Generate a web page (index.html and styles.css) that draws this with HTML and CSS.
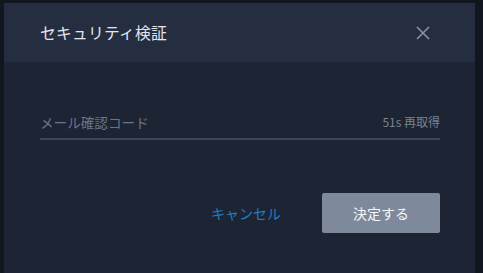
FILE: index.html
```html
<!DOCTYPE html>
<html lang="ja">
<head>
<meta charset="utf-8">
<link rel="stylesheet" href="styles.css">
</head>
<body>
<div class="modal">
  <div class="modal-header">
    <div class="modal-title">セキュリティ検証</div>
    <button class="close" aria-label="close">
      <svg width="14" height="14" viewBox="0 0 14 14"><path d="M1 1L13 13M13 1L1 13" stroke="#8a93a3" stroke-width="1.6" fill="none"/></svg>
    </button>
  </div>
  <div class="modal-body">
    <div class="field">
      <span class="placeholder">メール確認コード</span>
      <span class="resend">51s 再取得</span>
    </div>
    <div class="actions">
      <button class="btn-cancel">キャンセル</button>
      <button class="btn-ok">決定する</button>
    </div>
  </div>
</div>
</body>
</html>
```
FILE: styles.css
```css
html, body {
  margin: 0;
  padding: 0;
  background: #11161f;
  width: 483px;
  height: 273px;
  overflow: hidden;
  font-family: "Noto Sans CJK JP", "Noto Sans", sans-serif;
}
body {
  padding: 3px 8px 0 4px;
  box-sizing: border-box;
}
.modal {
  width: 471px;
  height: 280px;
  background: #1d2433;
}
.modal-header {
  height: 59px;
  background: #252d40;
  display: flex;
  align-items: center;
  justify-content: space-between;
  padding: 0 45px 0 36px;
  box-sizing: border-box;
}
.modal-title {
  color: #e3e6ec;
  font-size: 15.8px;
  letter-spacing: 0.2px;
  line-height: 20px;
  padding-top: 1px;
}
.close {
  background: none;
  border: none;
  padding: 0;
  width: 14px;
  height: 14px;
  display: flex;
}
.modal-body {
  padding: 46px 35px 0 36px;
}
.field {
  display: flex;
  justify-content: space-between;
  align-items: center;
  height: 27px;
  border-bottom: 2px solid #3b4459;
  padding-bottom: 3px;
}
.placeholder {
  color: #6c7486;
  font-size: 13.6px;
}
.resend {
  color: #7a8294;
  font-size: 12px;
}
.actions {
  display: flex;
  justify-content: flex-end;
  align-items: center;
  margin-top: 53px;
  gap: 41px;
}
.btn-cancel {
  background: none;
  border: none;
  padding: 0;
  color: #1f7fc4;
  font-family: inherit;
  font-size: 14px;
}
.btn-ok {
  width: 118px;
  height: 40px;
  background: #7e8a9b;
  border: none;
  border-radius: 2px;
  color: #f4f6f8;
  font-family: inherit;
  font-size: 14px;
}
```
